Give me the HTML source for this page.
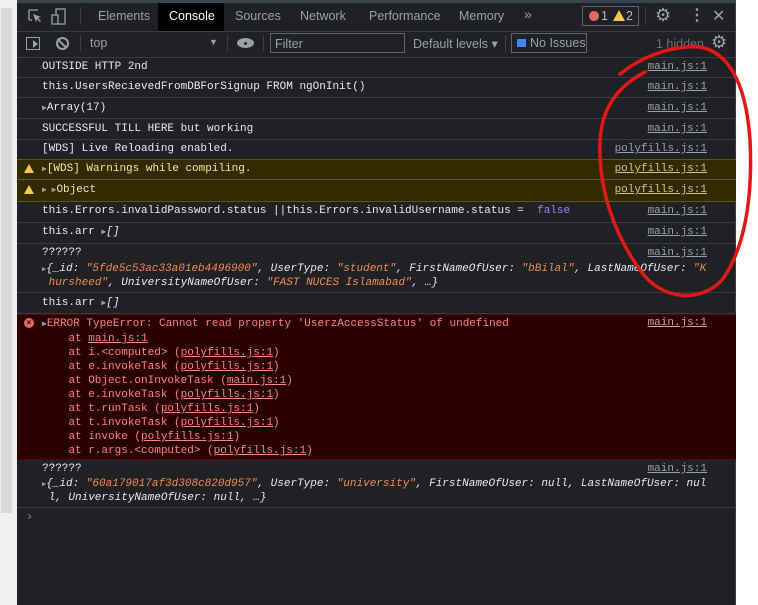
<!DOCTYPE html>
<html><head><meta charset="utf-8"><style>
*{margin:0;padding:0;box-sizing:border-box}
body{width:758px;height:605px;background:#fff;position:relative;overflow:hidden;font-family:"Liberation Sans",sans-serif}
.a{position:absolute}
#strip{left:0;top:0;width:17px;height:605px;background:#f0f0f0}
#thumb{left:1px;top:8px;width:11px;height:505px;background:#dadada}
#dt{left:17px;top:0;width:719px;height:605px;background:#202124;border-right:1px solid #3c3c3c}
.m{font-family:"Liberation Mono",monospace;font-size:11px;color:#e8eaed;white-space:pre}
.tb{color:#9aa0a6;font-size:12.5px}
.row{position:absolute;left:17px;width:719px;border-bottom:1px solid #3a3a3a}
.src{position:absolute;right:51px;font-family:"Liberation Mono",monospace;font-size:11px;color:#9aa0a6;text-decoration:underline}
.str{color:#f28b54}
.it{font-style:italic}
.gear{color:#9aa0a6;font-family:"DejaVu Sans",sans-serif;font-size:18px;line-height:18px}
</style></head><body>
<div class="a" id="strip"></div><div class="a" id="thumb"></div>
<div class="a" id="dt"></div>
<div class="a" style="left:17px;top:0;width:719px;height:3px;background:#3c4450"></div>
<div class="a" style="left:17px;top:31px;width:719px;height:1px;background:#3c3c3c"></div>
<svg class="a" style="left:27px;top:8px" width="40" height="18"><path d="M2 2h9M2 2v10M2 12h3" stroke="#9aa0a6" fill="none" stroke-width="1.3"/><path d="M6 6l8 3-3 1 3 3-1 1-3-3-1 3z" fill="#9aa0a6"/><rect x="29" y="1" width="9" height="15" stroke="#9aa0a6" fill="none" stroke-width="1.3"/><rect x="25" y="7" width="6" height="9" stroke="#9aa0a6" fill="#202124" stroke-width="1.3"/></svg>
<div class="a" style="left:80px;top:7px;width:1px;height:18px;background:#3c3c3c"></div>
<div class="a tb" style="left:98px;top:9px">Elements</div>
<div class="a" style="left:158px;top:3px;width:66px;height:28px;background:#000"></div>
<div class="a tb" style="left:169px;top:9px;color:#fff">Console</div>
<div class="a tb" style="left:235px;top:9px">Sources</div>
<div class="a tb" style="left:300px;top:9px">Network</div>
<div class="a tb" style="left:369px;top:9px">Performance</div>
<div class="a tb" style="left:459px;top:9px">Memory</div>
<div class="a tb" style="left:524px;top:6px;font-size:14px">»</div>
<div class="a" style="left:582px;top:6px;width:57px;height:20px;border:1px solid #5f6368"></div>
<div class="a" style="left:589px;top:11px;width:10px;height:10px;border-radius:50%;background:#e46962"></div>
<div class="a tb" style="left:601px;top:9px;color:#bbb">1</div>
<div class="a" style="left:613px;top:10px;width:0;height:0;border-left:6px solid transparent;border-right:6px solid transparent;border-bottom:11px solid #f2c94c"></div>
<div class="a tb" style="left:626px;top:9px;color:#bbb">2</div>
<div class="a" style="left:645px;top:7px;width:1px;height:18px;background:#3c3c3c"></div>
<div class="a gear" style="left:655px;top:7px">⚙</div>
<div class="a tb" style="left:689px;top:5px;font-size:16px;font-weight:bold">⋮</div>
<div class="a tb" style="left:712px;top:6px;font-size:16px">✕</div>
<div class="a" style="left:17px;top:57px;width:719px;height:1px;background:#3c3c3c"></div>
<div class="a" style="left:26px;top:37px;width:14px;height:13px;border:1.5px solid #9aa0a6"></div>
<div class="a" style="left:33px;top:40px;width:0;height:0;border-top:4px solid transparent;border-bottom:4px solid transparent;border-left:5px solid #9aa0a6"></div>
<div class="a" style="left:56px;top:37px;width:13px;height:13px;border:2px solid #9aa0a6;border-radius:50%"></div>
<div class="a" style="left:61px;top:37px;width:2px;height:13px;background:#9aa0a6;transform:rotate(-45deg)"></div>
<div class="a" style="left:80px;top:35px;width:1px;height:17px;background:#3c3c3c"></div>
<div class="a tb" style="left:90px;top:36px">top</div>
<div class="a tb" style="left:209px;top:37px;font-size:9px">▼</div>
<div class="a" style="left:227px;top:35px;width:1px;height:17px;background:#3c3c3c"></div>
<div class="a" style="left:237px;top:38px;width:17px;height:10px;border-radius:50%;background:#9aa0a6"></div>
<div class="a" style="left:242px;top:40px;width:7px;height:7px;border-radius:50%;background:#202124;border:2px solid #9aa0a6"></div>
<div class="a" style="left:263px;top:35px;width:1px;height:17px;background:#3c3c3c"></div>
<div class="a" style="left:270px;top:33px;width:135px;height:20px;border:1px solid #5f6368"></div>
<div class="a tb" style="left:275px;top:37px">Filter</div>
<div class="a tb" style="left:413px;top:36px">Default levels ▾</div>
<div class="a" style="left:505px;top:35px;width:1px;height:17px;background:#3c3c3c"></div>
<div class="a" style="left:511px;top:33px;width:76px;height:20px;border:1px solid #5f6368"></div>
<div class="a" style="left:517px;top:39px;width:9px;height:8px;background:#4285f4"></div>
<div class="a tb" style="left:530px;top:36px">No Issues</div>
<div class="a tb" style="left:656px;top:37px;color:#6e6e6e">1 hidden</div>
<div class="a gear" style="left:711px;top:34px">⚙</div>
<div class="row" style="top:58px;height:20px"></div>
<div class="a m" style="left:42px;top:61px">OUTSIDE HTTP 2nd</div><div class="src" style="top:61px">main.js:1</div>
<div class="row" style="top:78px;height:20px"></div>
<div class="a m" style="left:42px;top:81px">this.UsersRecievedFromDBForSignup FROM ngOnInit()</div><div class="src" style="top:81px">main.js:1</div>
<div class="row" style="top:98px;height:21px"></div>
<div class="a m" style="left:42px;top:102px"><span style="font-size:8px;color:#9aa0a6">▶</span>Array(17)</div><div class="src" style="top:102px">main.js:1</div>
<div class="row" style="top:119px;height:21px"></div>
<div class="a m" style="left:42px;top:123px">SUCCESSFUL TILL HERE but working</div><div class="src" style="top:123px">main.js:1</div>
<div class="row" style="top:140px;height:20px"></div>
<div class="a m" style="left:42px;top:143px">[WDS] Live Reloading enabled.</div><div class="src" style="top:143px">polyfills.js:1</div>
<div class="row" style="top:159px;height:21px;background:#332b00;border-top:1px solid #665500;border-bottom:1px solid #665500"></div>
<div class="a" style="left:24px;top:164px;border-left:5px solid transparent;border-right:5px solid transparent;border-bottom:9px solid #f2c94c"></div>
<div class="a m" style="left:42px;top:163px;color:#f2e6a6"><span style="font-size:8px;color:#9aa0a6">▶</span>[WDS] Warnings while compiling.</div><div class="src" style="top:163px;color:#c9c39a">polyfills.js:1</div>
<div class="row" style="top:180px;height:22px;background:#332b00;border-bottom:1px solid #665500"></div>
<div class="a" style="left:24px;top:185px;border-left:5px solid transparent;border-right:5px solid transparent;border-bottom:9px solid #f2c94c"></div>
<div class="a m" style="left:42px;top:184px;color:#f2e6a6"><span style="font-size:8px;color:#9aa0a6">▶ ▶</span>Object</div><div class="src" style="top:184px;color:#c9c39a">polyfills.js:1</div>
<div class="row" style="top:202px;height:21px"></div>
<div class="a m" style="left:42px;top:205px">this.Errors.invalidPassword.status ||this.Errors.invalidUsername.status =  <span style="color:#9980ff">false</span></div><div class="src" style="top:205px">main.js:1</div>
<div class="row" style="top:223px;height:21px"></div>
<div class="a m" style="left:42px;top:226px">this.arr <span style="font-size:8px;color:#9aa0a6">▶</span><span class="it">[]</span></div><div class="src" style="top:226px">main.js:1</div>
<div class="row" style="top:244px;height:49px"></div>
<div class="a m" style="left:42px;top:247px">??????</div><div class="src" style="top:247px">main.js:1</div>
<div class="a m it" style="left:42px;top:263px;line-height:13px"><span style="font-size:7px;color:#9aa0a6;font-style:normal">▶</span>{_id: <span class="str">"5fde5c53ac33a01eb4496900"</span>, UserType: <span class="str">"student"</span>, FirstNameOfUser: <span class="str">"bBilal"</span>, LastNameOfUser: <span class="str">"K</span>
 <span class="str">hursheed"</span>, UniversityNameOfUser: <span class="str">"FAST NUCES Islamabad"</span>, …}</div>
<div class="row" style="top:293px;height:21px"></div>
<div class="a m" style="left:42px;top:297px">this.arr <span style="font-size:8px;color:#9aa0a6">▶</span><span class="it">[]</span></div>
<div class="row" style="top:314px;height:146px;background:#290000;border-top:1px solid #5c0000;border-bottom:1px solid #5c0000"></div>
<div class="a" style="left:24px;top:318px;width:10px;height:10px;border-radius:50%;background:#e46962;color:#290000;font-size:8px;line-height:10px;text-align:center;font-weight:bold">×</div>
<div class="a m" style="left:42px;top:317px;color:#ff8080;line-height:14px"><span style="font-size:8px;color:#9aa0a6">▶</span>ERROR TypeError: Cannot read property 'UserzAccessStatus' of undefined
    at <u>main.js:1</u>
    at i.&lt;computed&gt; (<u>polyfills.js:1</u>)
    at e.invokeTask (<u>polyfills.js:1</u>)
    at Object.onInvokeTask (<u>main.js:1</u>)
    at e.invokeTask (<u>polyfills.js:1</u>)
    at t.runTask (<u>polyfills.js:1</u>)
    at t.invokeTask (<u>polyfills.js:1</u>)
    at invoke (<u>polyfills.js:1</u>)
    at r.args.&lt;computed&gt; (<u>polyfills.js:1</u>)</div>
<div class="src" style="top:317px;color:#d0a0a0">main.js:1</div>
<div class="row" style="top:460px;height:48px"></div>
<div class="a m" style="left:42px;top:463px">??????</div><div class="src" style="top:463px">main.js:1</div>
<div class="a m it" style="left:42px;top:478px;line-height:13px"><span style="font-size:7px;color:#9aa0a6;font-style:normal">▶</span>{_id: <span class="str">"60a179017af3d308c820d957"</span>, UserType: <span class="str">"university"</span>, FirstNameOfUser: null, LastNameOfUser: nul
 l, UniversityNameOfUser: null, …}</div>
<div class="a" style="left:26px;top:510px;color:#4d8ee0;font-family:'Liberation Mono',monospace;font-size:12px">›</div>
<svg class="a" style="left:0;top:0" width="758" height="605"><path d="M620,74 C640,58 670,45 700,47 C728,52 746,82 750,140 C753,200 744,250 722,280 C702,302 662,302 640,270 C615,235 598,190 600,140 C602,110 615,88 645,72" stroke="#e01818" stroke-width="3.5" fill="none" stroke-linecap="round"/></svg>
</body></html>
